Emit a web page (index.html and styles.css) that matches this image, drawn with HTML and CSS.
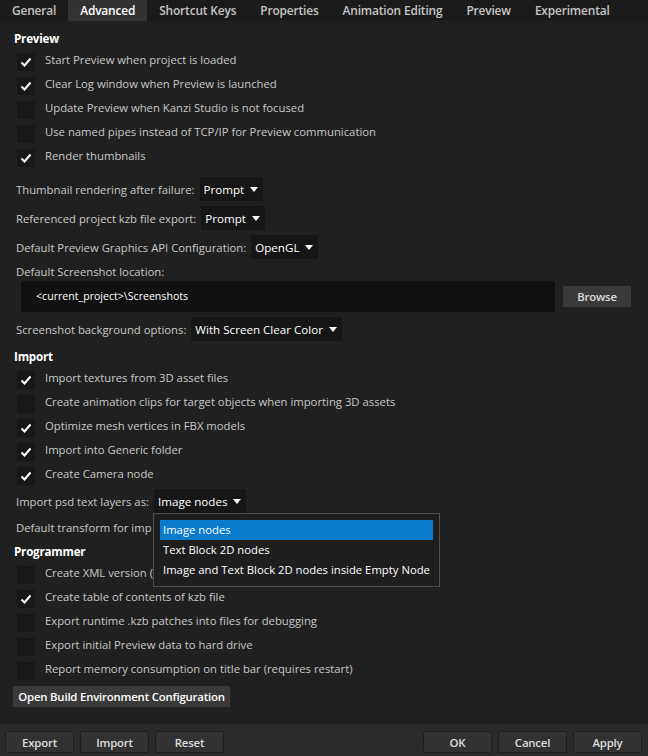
FILE: index.html
```html
<!DOCTYPE html>
<html lang="en">
<head>
<meta charset="utf-8">
<title>Advanced settings</title>
<link rel="stylesheet" href="styles.css">
</head>
<body>
<div class="window">
  <nav class="tabs">
    <span class="tab">General</span>
    <span class="tab active">Advanced</span>
    <span class="tab">Shortcut Keys</span>
    <span class="tab">Properties</span>
    <span class="tab">Animation Editing</span>
    <span class="tab">Preview</span>
    <span class="tab">Experimental</span>
  </nav>

  <main class="content">
    <h2 class="heading">Preview</h2>
    <ul class="checks">
      <li class="check"><span class="box on"><svg viewBox="0 0 18 18"><polyline points="4.5,9.5 7.5,12.5 13.5,5.5"/></svg></span>Start Preview when project is loaded</li>
      <li class="check"><span class="box on"><svg viewBox="0 0 18 18"><polyline points="4.5,9.5 7.5,12.5 13.5,5.5"/></svg></span>Clear Log window when Preview is launched</li>
      <li class="check"><span class="box"></span>Update Preview when Kanzi Studio is not focused</li>
      <li class="check"><span class="box"></span>Use named pipes instead of TCP/IP for Preview communication</li>
      <li class="check"><span class="box on"><svg viewBox="0 0 18 18"><polyline points="4.5,9.5 7.5,12.5 13.5,5.5"/></svg></span>Render thumbnails</li>
    </ul>

    <div class="fields fields-preview">
      <div class="field"><span class="label">Thumbnail rendering after failure:</span><span class="select">Prompt<i class="arrow"></i></span></div>
      <div class="field"><span class="label">Referenced project kzb file export:</span><span class="select">Prompt<i class="arrow"></i></span></div>
      <div class="field"><span class="label">Default Preview Graphics API Configuration:</span><span class="select">OpenGL<i class="arrow"></i></span></div>
      <div class="label label-line">Default Screenshot location:</div>
      <div class="path-row">
        <span class="path">&lt;current_project&gt;\Screenshots</span>
        <button class="btn browse">Browse</button>
      </div>
      <div class="field"><span class="label">Screenshot background options:</span><span class="select">With Screen Clear Color<i class="arrow"></i></span></div>
    </div>

    <h2 class="heading heading-import">Import</h2>
    <ul class="checks">
      <li class="check"><span class="box on"><svg viewBox="0 0 18 18"><polyline points="4.5,9.5 7.5,12.5 13.5,5.5"/></svg></span>Import textures from 3D asset files</li>
      <li class="check"><span class="box"></span>Create animation clips for target objects when importing 3D assets</li>
      <li class="check"><span class="box on"><svg viewBox="0 0 18 18"><polyline points="4.5,9.5 7.5,12.5 13.5,5.5"/></svg></span>Optimize mesh vertices in FBX models</li>
      <li class="check"><span class="box on"><svg viewBox="0 0 18 18"><polyline points="4.5,9.5 7.5,12.5 13.5,5.5"/></svg></span>Import into Generic folder</li>
      <li class="check"><span class="box on"><svg viewBox="0 0 18 18"><polyline points="4.5,9.5 7.5,12.5 13.5,5.5"/></svg></span>Create Camera node</li>
    </ul>

    <div class="fields fields-import">
      <div class="field"><span class="label">Import psd text layers as:</span><span class="select">Image nodes<i class="arrow"></i></span></div>
      <div class="field"><span class="label">Default transform for imp</span></div>
    </div>

    <h2 class="heading heading-prog">Programmer</h2>
    <ul class="checks">
      <li class="check"><span class="box"></span>Create XML version (</li>
      <li class="check"><span class="box on"><svg viewBox="0 0 18 18"><polyline points="4.5,9.5 7.5,12.5 13.5,5.5"/></svg></span>Create table of contents of kzb file</li>
      <li class="check"><span class="box"></span>Export runtime .kzb patches into files for debugging</li>
      <li class="check"><span class="box"></span>Export initial Preview data to hard drive</li>
      <li class="check"><span class="box"></span>Report memory consumption on title bar (requires restart)</li>
    </ul>

    <button class="btn build">Open Build Environment Configuration</button>

    <ul class="popup">
      <li class="option selected">Image nodes</li>
      <li class="option">Text Block 2D nodes</li>
      <li class="option">Image and Text Block 2D nodes inside Empty Node</li>
    </ul>
  </main>

  <footer class="footer">
    <div class="group">
      <button class="btn foot">Export</button>
      <button class="btn foot">Import</button>
      <button class="btn foot">Reset</button>
    </div>
    <div class="group">
      <button class="btn foot">OK</button>
      <button class="btn foot">Cancel</button>
      <button class="btn foot">Apply</button>
    </div>
  </footer>
</div>
</body>
</html>
```

FILE: styles.css
```css
* { box-sizing: border-box; }

body {
  margin: 0;
  width: 648px;
  height: 756px;
  overflow: hidden;
  background: #202020;
  font-family: "Open Sans", "Noto Sans", sans-serif;
  font-size: 11.3px;
  color: #c8c8c8;
}

.window {
  display: flex;
  flex-direction: column;
  height: 756px;
}

.tabs {
  display: flex;
  height: 21px;
  background: #1b1b1b;
  flex: none;
}

.tab {
  padding: 0 12px;
  line-height: 21px;
  font-size: 11.9px;
  font-weight: 600;
  color: #c4c4c4;
  letter-spacing: -0.15px;
}

.tab.active {
  background: #333333;
  color: #ffffff;
}

.content {
  flex: 1;
  position: relative;
  padding: 10px 0 0 14px;
}

.heading {
  margin: 0;
  font-size: 11.6px;
  font-weight: 700;
  line-height: 16px;
  color: #ffffff;
  letter-spacing: -0.2px;
}

.heading-import { margin-top: 8px; }
.heading-prog { margin-top: 5px; }

.checks {
  list-style: none;
  margin: 0;
  padding: 0 0 0 3px;
}

.check {
  display: flex;
  align-items: center;
  gap: 10px;
  height: 24px;
}

.box {
  width: 18px;
  height: 18px;
  margin-top: 5px;
  background: #181818;
  flex: none;
  display: flex;
}

.box svg {
  width: 18px;
  height: 18px;
}

.box polyline {
  fill: none;
  stroke: #ffffff;
  stroke-width: 2;
}

.fields {
  display: flex;
  flex-direction: column;
  gap: 5px;
  padding-left: 2px;
}

.fields-preview { margin-top: 10px; }
.fields-import { margin-top: 4px; gap: 2px; }

.field {
  display: flex;
  align-items: center;
  gap: 5px;
  height: 24px;
}

.label-line {
  line-height: 16px;
}

.select {
  display: flex;
  align-items: center;
  gap: 6px;
  height: 24px;
  padding: 0 5px 0 4px;
  background: #161616;
  color: #ffffff;
  font-size: 11.6px;
}

.arrow {
  width: 0;
  height: 0;
  border-left: 4px solid transparent;
  border-right: 4px solid transparent;
  border-top: 5px solid #ffffff;
}

.path-row {
  display: flex;
  align-items: center;
  gap: 8px;
  margin-top: -4px;
  padding-left: 5px;
}

.path {
  width: 534px;
  height: 31px;
  line-height: 31px;
  padding-left: 15px;
  background: #111111;
  color: #ffffff;
  font-size: 10.6px;
}

.btn {
  font-family: inherit;
  font-size: 11.4px;
  font-weight: 600;
  color: #dddddd;
  background: #3a3a3a;
  border: none;
  padding: 0;
  letter-spacing: -0.2px;
}

.browse {
  width: 68px;
  height: 21px;
}

.build {
  display: block;
  margin: 6px 0 0 -1px;
  width: 217px;
  height: 21px;
  color: #ffffff;
}

.popup {
  position: absolute;
  left: 153px;
  top: 492px;
  width: 287px;
  margin: 0;
  padding: 6px;
  list-style: none;
  background: #1e1e1e;
  border: 1px solid #4e4e4e;
}

.option {
  height: 20px;
  line-height: 20px;
  padding-left: 3px;
  color: #ffffff;
  font-size: 11.3px;
  white-space: nowrap;
}

.option.selected {
  background: #0a7acd;
}

.footer {
  flex: none;
  height: 32px;
  display: flex;
  justify-content: space-between;
  padding: 7px 6px 0 5px;
  background: #2a2a2a;
}

.group {
  display: flex;
  gap: 6px;
}

.foot {
  width: 69px;
  height: 22px;
  background: #323232;
  border: 1px solid #1e1e1e;
  border-radius: 2px;
}
```
